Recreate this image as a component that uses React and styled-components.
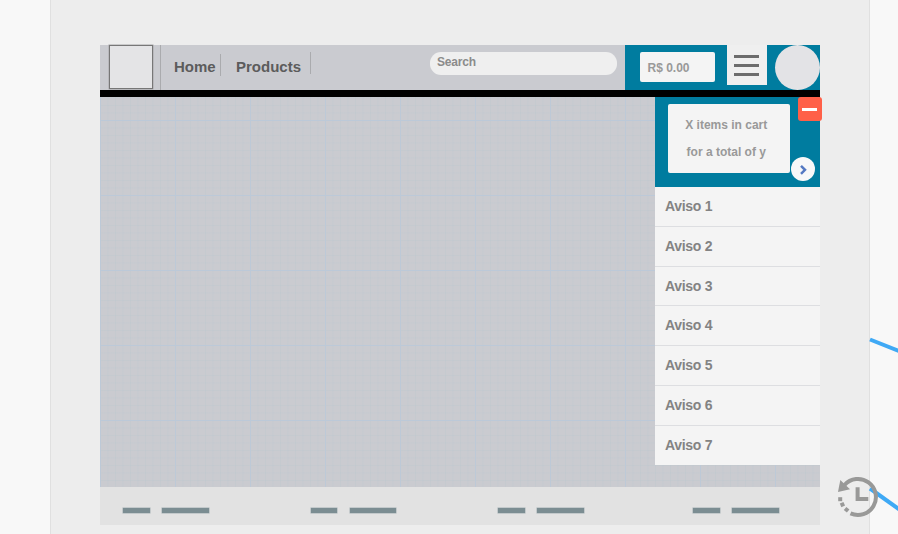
import React from "react";
import styled, { createGlobalStyle } from "styled-components";

const GlobalStyle = createGlobalStyle`
  * { box-sizing: border-box; }
  body { margin: 0; background: #f8f8f8; font-family: "Liberation Sans", Arial, sans-serif; font-weight: bold; overflow: hidden; }
`;

const Page = styled.div`
  position: relative;
  width: 898px;
  height: 534px;
  padding-left: 50px;
  overflow: hidden;
  background: #f8f8f8;
`;

const Artboard = styled.main`
  width: 820px;
  height: 534px;
  padding: 45px 49px 0;
  background: #ededed;
  border: solid #e0e0e0;
  border-width: 0 1px;
`;

const Screen = styled.div`
  display: flex;
  flex-direction: column;
  width: 720px;
  height: 480px;
`;

const Header = styled.header`
  display: flex;
  flex: none;
  height: 45px;
  background: #cacbd0;
`;

const HeaderMain = styled.div`
  display: flex;
  align-items: flex-start;
  width: 525px;
  padding-left: 9px;
`;

const Logo = styled.div`
  width: 43.5px;
  height: 44px;
  margin-right: 7.5px;
  background: #e4e4e6;
  border: 1px solid #777;
  box-shadow: 0 0 0 0.5px #a5a5a8;
`;

const Divider = styled.span`
  width: 1px;
  height: ${(p) => p.$height}px;
  margin-top: ${(p) => p.$top}px;
  background: #aaabae;
`;

const NavItem = styled.a`
  width: ${(p) => p.$width}px;
  padding: 13px 0 0 ${(p) => p.$inset}px;
  font-size: 15px;
  line-height: 18px;
  color: #5c5c5c;
`;

const Search = styled.div`
  width: 187px;
  height: 23px;
  margin: 7px 0 0 119px;
  padding: 3px 7px;
  border-radius: 11px;
  background: #efefef;
  font-size: 12px;
  line-height: 15px;
  letter-spacing: -0.2px;
  color: #8b8b8b;
`;

const Account = styled.div`
  display: flex;
  align-items: flex-start;
  width: 195px;
  padding-left: 15px;
  background: #007c9f;
`;

const Price = styled.div`
  width: 75px;
  height: 30px;
  margin-top: 7px;
  padding-left: 7.5px;
  border-radius: 2px;
  background: #f4f4f4;
  font-size: 12px;
  line-height: 32px;
  color: #999;
`;

const MenuButton = styled.div`
  display: flex;
  flex-direction: column;
  gap: 6px;
  width: 40px;
  height: 40px;
  margin: 0 8px 0 12px;
  padding: 10px 8px 0 7px;
  background: #efefef;
`;

const MenuBar = styled.span`
  height: 3px;
  background: #6c6c6c;
`;

const Avatar = styled.div`
  width: 45px;
  height: 45px;
  margin-top: -0.5px;
  border-radius: 50%;
  background: #e3e3e6;
`;

const Rule = styled.div`
  flex: none;
  height: 7px;
  background: #000;
`;

const Content = styled.section`
  display: flex;
  justify-content: flex-end;
  flex: none;
  height: 390px;
  background-color: #cacbd0;
  background-image:
    linear-gradient(90deg, #bdc9d7 1px, transparent 1px),
    linear-gradient(#bcc9d8 1px, transparent 1px),
    linear-gradient(90deg, rgba(178, 198, 205, 0.22) 1px, transparent 1px),
    linear-gradient(rgba(178, 198, 205, 0.22) 1px, transparent 1px);
  background-size: 75px 75px, 75px 75px, 7.5px 7.5px, 7.5px 7.5px;
  background-position: 0 0, 0 23px, 0 0, 0 0.5px;
`;

const Sidebar = styled.aside`
  width: 165px;
`;

const CartPanel = styled.div`
  position: relative;
  height: 90px;
  padding: 7px 0 0 13px;
  background: #007c9f;
`;

const CartSummary = styled.div`
  width: 122px;
  height: 68.5px;
  padding: 7.5px 5.5px 0 0;
  border-radius: 2px;
  background: #f4f4f4;
  font-size: 12px;
  line-height: 27px;
  text-align: center;
  color: #999;
`;

const CloseBadge = styled.div`
  position: absolute;
  top: 0;
  right: -1.5px;
  display: flex;
  align-items: center;
  justify-content: center;
  width: 24px;
  height: 24px;
  border-radius: 3px;
  background: #ff6048;
`;

const Minus = styled.span`
  width: 15px;
  height: 3px;
  background: #fff;
`;

const NextBadge = styled.div`
  position: absolute;
  top: 60px;
  right: 5px;
  width: 24px;
  height: 24px;
  border-radius: 50%;
  background: #f8f8f8;
  svg { display: block; }
`;

const Notices = styled.ul`
  margin: 0;
  padding: 0;
  list-style: none;
  background: #f4f4f4;
`;

const Notice = styled.li`
  height: 39.8px;
  padding: 10px;
  border-bottom: 1px solid #dddee1;
  font-size: 14px;
  line-height: 18px;
  letter-spacing: -0.3px;
  color: #838383;
  &:last-child { height: 39.2px; border-bottom: 0; }
`;

const Footer = styled.footer`
  display: flex;
  flex: none;
  height: 38px;
  padding: 21px 0 0 23px;
  background: #e2e2e2;
`;

const LinkPair = styled.div`
  display: flex;
  gap: 12.5px;
  width: ${(p) => p.$width}px;
`;

const LinkBar = styled.span`
  width: ${(p) => p.$width}px;
  height: 5px;
  background: #7b8d92;
  box-shadow: 0 0 0 0.5px #a4b0b3;
`;

const Connectors = styled.svg`
  position: absolute;
  left: 820px;
  top: 320px;
`;

const notices = [1, 2, 3, 4, 5, 6, 7];
const footerColumns = [187.5, 187.5, 195, 86];

export default function App() {
  return (
    <Page>
      <GlobalStyle />
      <Artboard>
        <Screen>
          <Header>
            <HeaderMain>
              <Logo />
              <Divider $height={45} $top={0} />
              <NavItem $width={59} $inset={13}>Home</NavItem>
              <Divider $height={22} $top={9} />
              <NavItem $width={89} $inset={15}>Products</NavItem>
              <Divider $height={22} $top={7} />
              <Search>Search</Search>
            </HeaderMain>
            <Account>
              <Price>R$ 0.00</Price>
              <MenuButton>
                <MenuBar />
                <MenuBar />
                <MenuBar />
              </MenuButton>
              <Avatar />
            </Account>
          </Header>
          <Rule />
          <Content>
            <Sidebar>
              <CartPanel>
                <CartSummary>
                  <div>X items in cart</div>
                  <div>for a total of y</div>
                </CartSummary>
                <CloseBadge><Minus /></CloseBadge>
                <NextBadge>
                  <svg width="24" height="24" viewBox="0 0 24 24">
                    <path d="M10 8.8l4 4-4 4" fill="none" stroke="#5579c2" strokeWidth="2.5" />
                  </svg>
                </NextBadge>
              </CartPanel>
              <Notices>
                {notices.map((n) => <Notice key={n}>Aviso {n}</Notice>)}
              </Notices>
            </Sidebar>
          </Content>
          <Footer>
            {footerColumns.map((w, i) => (
              <LinkPair key={i} $width={w}>
                <LinkBar $width={26.5} />
                <LinkBar $width={46.5} />
              </LinkPair>
            ))}
          </Footer>
        </Screen>
      </Artboard>
      <Connectors width="78" height="214" viewBox="0 0 78 214">
        <g fill="none" stroke="#3fa9f5" strokeWidth="4">
          <path d="M50 19.5L80 31.5" />
          <path d="M50 168.5L80 190" />
        </g>
        <g fill="none" stroke="#999998" strokeWidth="4">
          <path d="M24.5 165A18 18 0 1 1 30.5 193.4" />
          <path d="M37.6 167.3V179H48.3" />
        </g>
        <g fill="#999998">
          <path d="M20.3 160L18 172L30 169.3Z" />
          <rect x="18.2" y="177.2" width="4" height="4" />
          <rect x="20.4" y="182.6" width="4" height="4" transform="rotate(-24 22.4 184.6)" />
          <rect x="24.6" y="187.8" width="4" height="4" transform="rotate(-50 26.6 189.8)" />
        </g>
      </Connectors>
    </Page>
  );
}
